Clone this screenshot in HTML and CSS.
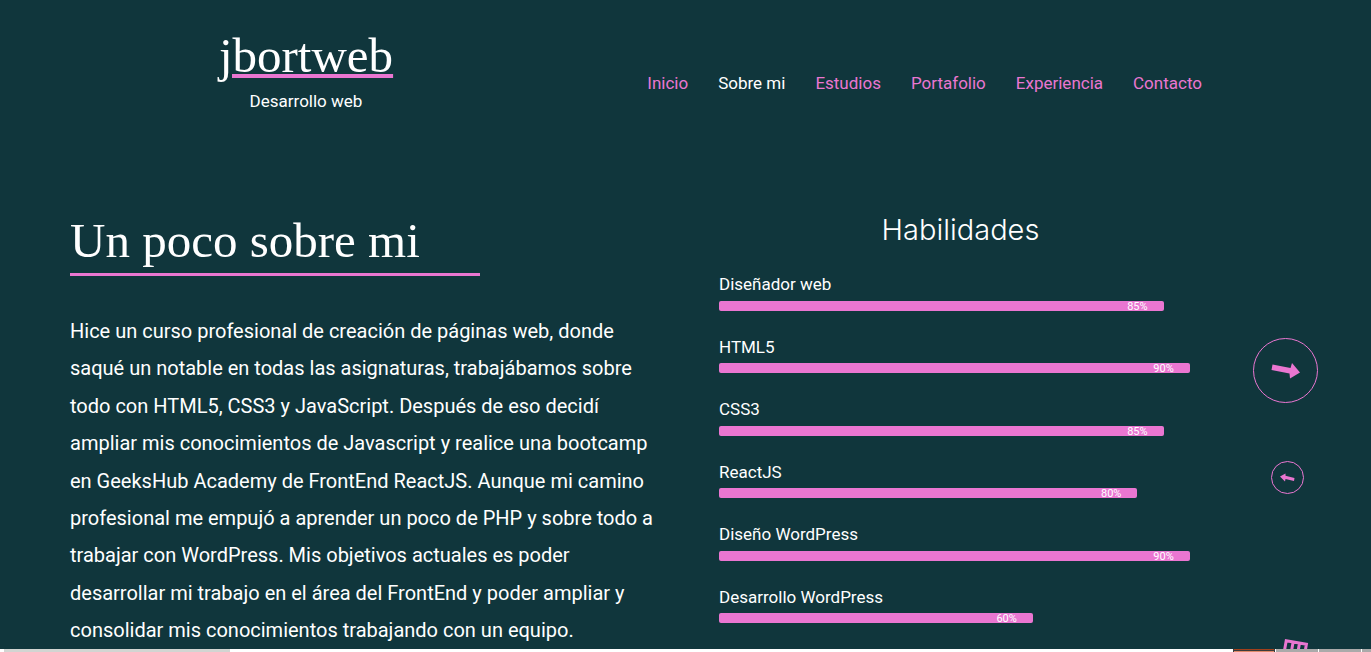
FILE: index.html
```html
<!DOCTYPE html>
<html lang="es">
<head>
<meta charset="utf-8">
<title>jbortweb - Sobre mi</title>
<link rel="stylesheet" href="styles.css">
</head>
<body>
<div class="page">
  <header class="header">
    <div class="brand">
      <a class="logo" href="#">jbortweb</a>
      <p class="tagline">Desarrollo web</p>
    </div>
    <nav class="nav">
      <a href="#">Inicio</a>
      <a class="active" href="#" aria-current="page">Sobre mi</a>
      <a href="#">Estudios</a>
      <a href="#">Portafolio</a>
      <a href="#">Experiencia</a>
      <a href="#">Contacto</a>
    </nav>
  </header>
  <main class="content">
    <section class="about">
      <h1>Un poco sobre mi</h1>
      <p>Hice un curso profesional de creación de páginas web, donde saqué un notable en todas las asignaturas, trabajábamos sobre todo con HTML5, CSS3 y JavaScript. Después de eso decidí ampliar mis conocimientos de Javascript y realice una bootcamp en GeeksHub Academy de FrontEnd ReactJS. Aunque mi camino profesional me empujó a aprender un poco de PHP y sobre todo a trabajar con WordPress. Mis objetivos actuales es poder desarrollar mi trabajo en el área del FrontEnd y poder ampliar y consolidar mis conocimientos trabajando con un equipo.</p>
    </section>
    <section class="skills">
      <h2>Habilidades</h2>
      <ul>
        <li><span class="label">Diseñador web</span><div class="bar" style="width:85%">85%</div></li>
        <li><span class="label">HTML5</span><div class="bar" style="width:90%">90%</div></li>
        <li><span class="label">CSS3</span><div class="bar" style="width:85%">85%</div></li>
        <li><span class="label">ReactJS</span><div class="bar" style="width:80%">80%</div></li>
        <li><span class="label">Diseño WordPress</span><div class="bar" style="width:90%">90%</div></li>
        <li><span class="label">Desarrollo WordPress</span><div class="bar" style="width:60%">60%</div></li>
      </ul>
    </section>
  </main>
  <div class="floating">
    <a class="next" href="#" aria-label="Siguiente">
      <svg viewBox="0 0 30 24"><path d="M1.500 5.500 L19.500 9 L21 4 L29 13.500 L19 19.500 L18.500 14.500 L0.500 11 Z"/></svg>
    </a>
    <a class="prev" href="#" aria-label="Anterior">
      <svg viewBox="0 0 30 24"><path d="M28 18 L11 14 L10 19 L0 9 L11 3 L11 7.500 L29 12 Z"/></svg>
    </a>
    <a class="menu" href="#" aria-label="Menú">
      <svg viewBox="0 0 26 24"><g transform="rotate(10 2 1)"><path class="grid" d="M3.500 2.500 H24 V22 H3.500 Z M10.500 2.500 V22 M17 2.500 V22"/></g></svg>
    </a>
  </div>
</div>
<div class="strip"><span class="thumb"></span><span class="tab current"></span><span class="tab"></span><span class="tab"></span><span class="tab last"></span></div>
</body>
</html>
```
FILE: styles.css
```css
* { box-sizing: border-box; }

body {
  display: flex;
  flex-direction: column;
  height: 100vh;
  margin: 0;
  overflow: hidden;
  background: #10363c;
  color: #fff;
  font-family: Roboto, sans-serif;
  font-size: 17px;
}

a { color: #ea76d1; text-decoration: none; }
h1, h2, p, ul { margin: 0; padding: 0; font-weight: 400; }

.page { position: relative; flex: 1; min-height: 0; overflow: hidden; }

.header {
  display: grid;
  grid-template-columns: 1fr 1fr;
  padding: 28px 136px 0 70px;
}

.brand { width: 472px; text-align: center; }
.logo {
  color: #fff;
  font: 49px/56px "Liberation Serif", serif;
  text-decoration: underline 4px #ea76d1;
  text-underline-offset: 2px;
}
.tagline { margin-top: 5px; line-height: 24px; }

.nav { display: flex; gap: 30px; justify-content: flex-end; padding: 43px 33px 0 0; line-height: 24px; white-space: nowrap; }
.nav .active { color: #fff; }

.content {
  display: grid;
  grid-template-columns: 589fr 523fr;
  gap: 60px;
  padding: 99px 129px 0 70px;
}

.about h1 {
  width: 410px;
  max-width: 100%;
  padding-bottom: 4px;
  border-bottom: 3px solid #ea76d1;
  font: 49px/57px "Liberation Serif", serif;
}
.about p { margin-top: 37px; font-size: 20px; line-height: 1.87; }

.skills h2 { padding-right: 40px; font: 300 29px/36px Inter, sans-serif; text-align: center; }
.skills ul { margin-top: 24px; list-style: none; }
.skills li { padding-bottom: 24px; }
.label { display: block; margin-bottom: 3px; line-height: 1.5; }
.bar {
  height: 10px;
  padding-right: 16px;
  border-radius: 2px;
  background: #ea76d1;
  font-size: 11px;
  line-height: 11px;
  text-align: right;
}

.floating {
  position: absolute;
  top: 338px;
  right: 53px;
  display: flex;
  flex-direction: column;
  align-items: center;
}
.floating a { display: flex; align-items: center; justify-content: center; border-radius: 50%; }
.floating svg { display: block; fill: #ea76d1; }
.next { width: 65px; height: 65px; border: 1px solid #ea76d1; }
.next svg { width: 30px; }
.prev { width: 33px; height: 33px; margin: 58px 0 0 4px; border: 1px solid #ea76d1; }
.prev svg { width: 15px; }
.menu { margin: 144px 0 0 20px; }
.menu svg { width: 26px; overflow: visible; }
.floating .grid { fill: none; stroke: #ea76d1; stroke-width: 3; }

.strip { display: flex; flex: 0 0 3px; gap: 1px; background: #fff; }
.thumb { width: 226px; margin: 0 auto 0 4px; background: #d2d5d2; }
.tab { width: 42px; background: #aaa; }
.current {
  border: solid #3c3c3c;
  border-width: 0 1px;
  background: linear-gradient(#a0401c 1px, #3c3c3c 1px 2px, #e08a6a 2px);
}
.last { width: 9px; }
```
